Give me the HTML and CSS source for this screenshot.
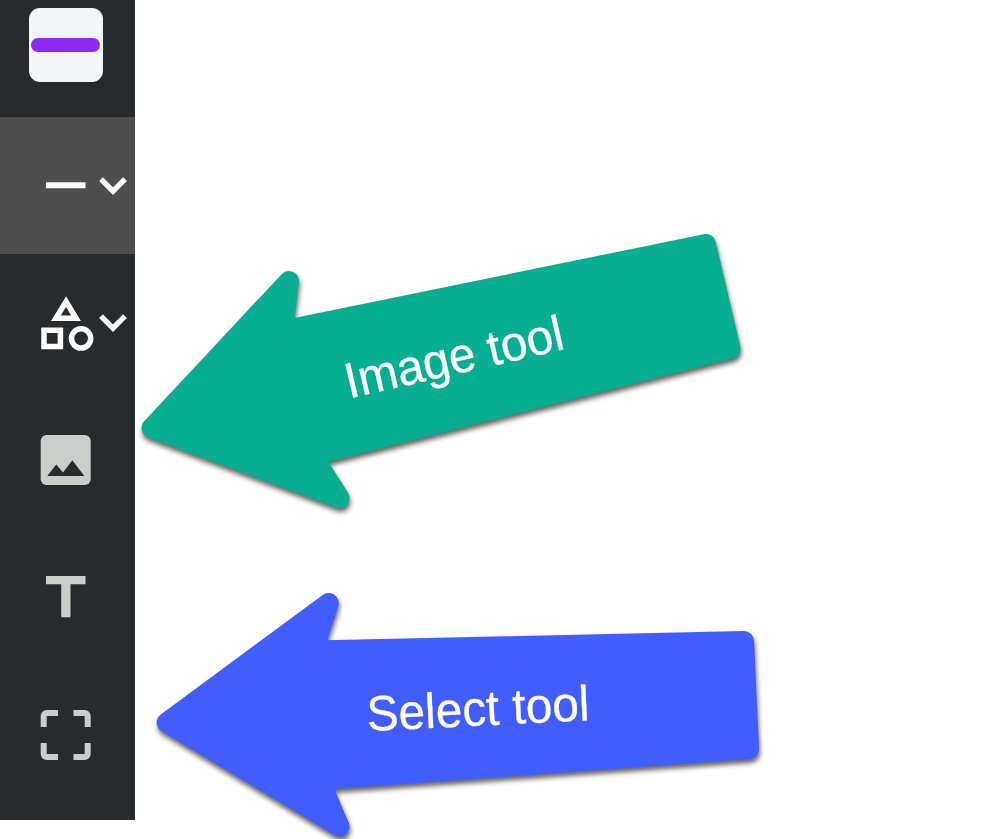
FILE: index.html
```html
<!DOCTYPE html>
<html lang="en">
<head>
<meta charset="UTF-8" />
<title>Drawing tools</title>
<link rel="stylesheet" href="styles.css">
</head>

<body>
	<nav class="toolbar">
		<div class="color">
			<div class="swatch"><div class="stroke"></div></div>
		</div>
		<div class="tool active">
			<svg class="icon" viewBox="0 0 56 56"><path d="M8 24.3h39.5v6H8z"/></svg>
			<svg class="chevron" viewBox="0 0 28 18"><path d="M2 2.2l12 12 12-12"/></svg>
		</div>
		<div class="tool">
			<svg class="icon shapes" viewBox="0 0 56 56">
				<path d="M28 6.6L17.9 23.2h20.2z"/>
				<path d="M6 35.3h16.4v16.2H6z"/>
				<circle cx="43.1" cy="43.4" r="9.6"/>
			</svg>
			<svg class="chevron" viewBox="0 0 28 18"><path d="M2 2.2l12 12 12-12"/></svg>
		</div>
		<div class="tool">
			<svg class="icon light" viewBox="0 0 56 56">
				<rect x="2.7" y="3" width="50" height="50" rx="5.8"/>
				<path class="hills" d="M9.3 44l8.9-11.5 6.8 8 9.3-12.2L46.3 44z"/>
			</svg>
		</div>
		<div class="tool">
			<svg class="icon light" viewBox="0 0 56 56"><path d="M8 5.9h39.5v8.4H32.5v33H23.2v-33H8z"/></svg>
		</div>
		<div class="tool">
			<svg class="icon corners" viewBox="0 0 56 56">
				<path d="M5.7 20V9a3 3 0 0 1 3-3H20M35.5 6h11.2a3 3 0 0 1 3 3V20M49.7 36v11a3 3 0 0 1-3 3H35.5M20 50H8.7a3 3 0 0 1-3-3V36"/>
			</svg>
		</div>
	</nav>

	<!-- arrows that lie over the page and point at the tools -->
	<svg class="callouts" viewBox="0 0 1007 839">
		<path class="arrow green" d="M151.5 428L289 281L283 330.5L706 244L730.5 348.5L312.3 455.5L339.5 498z"/>
		<text transform="translate(349 398.5) rotate(-12.9) scale(.965 1)">Image tool</text>
		<path class="arrow blue" d="M166.7 722.5L328.7 603L313.6 650.5L744 641L749 749L319.6 780L339.5 826.5z"/>
		<text transform="translate(367.5 731) rotate(-2.8) scale(.965 1)">Select tool</text>
	</svg>
</body>

</html>
```

FILE: styles.css
```css
body {
	margin: 0;
	background-color: white;
	height: 839px;
	overflow: hidden;
	font-family: "Liberation Sans", Arial, sans-serif;
}

.toolbar {
	width: 135px;
	height: 820px;
	background-color: #282b2d;
}

.color {
	box-sizing: border-box;
	height: 117px;
	padding: 8px 0 0 29px;
}

.swatch {
	display: flex;
	align-items: center;
	width: 74px;
	height: 74px;
	border-radius: 11px;
	background-color: #f4f5f8;
}

.stroke {
	width: 69px;
	height: 14px;
	margin-left: 2px;
	border-radius: 7px;
	background-color: #8f29f5;
}

.tool {
	display: flex;
	align-items: center;
	box-sizing: border-box;
	height: 137.4px;
	padding-left: 38px;
}

.active {
	background-color: #4e4e4e;
}

.icon {
	width: 56px;
	height: 56px;
	fill: white;
}

.chevron {
	width: 28px;
	height: 18px;
	margin-left: 4.6px;
	overflow: visible;
	fill: none;
	stroke: white;
	stroke-width: 5.4px;
}

.shapes {
	fill: none;
	stroke: white;
	stroke-width: 5.5px;
}

.light {
	fill: #cacdca;
}

.hills {
	fill: #282b2d;
}

.corners {
	fill: none;
	stroke: #cacdca;
	stroke-width: 6px;
}

.callouts {
	position: absolute;
	top: 0;
	left: 0;
	width: 1007px;
	height: 839px;
}

.arrow {
	stroke-width: 20px;
	stroke-linejoin: round;
	filter: drop-shadow(1px 4px 2.5px rgba(0, 0, 0, 0.6));
}

.green {
	fill: #08ae92;
	stroke: #08ae92;
}

.blue {
	fill: #425dfd;
	stroke: #425dfd;
}

.callouts text {
	fill: white;
	stroke: white;
	stroke-width: 0.3px;
	font-size: 49.5px;
}
```
